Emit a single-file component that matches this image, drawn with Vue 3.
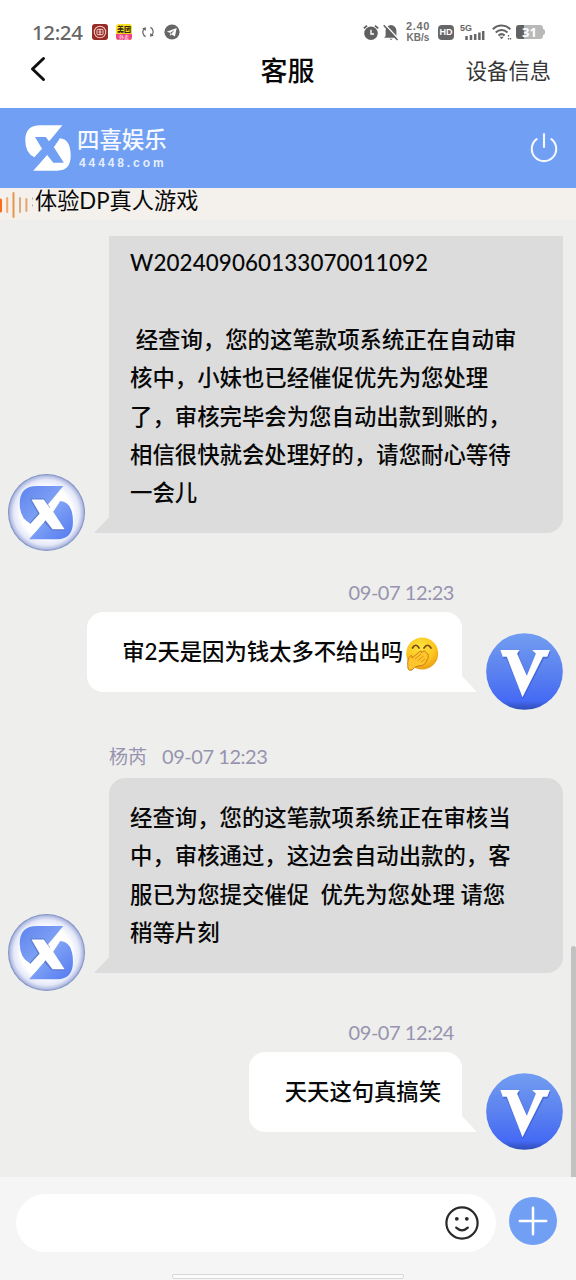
<script setup>
const messages = [
  {
    side: 'left',
    kind: 'first',
    lines: ['W202409060133070011092', '', ' 经查询，您的这笔款项系统正在自动审', '核中，小妹也已经催促优先为您处理', '了，审核完毕会为您自动出款到账的，', '相信很快就会处理好的，请您耐心等待', '一会儿'],
  },
  { side: 'right', time: '09-07 12:23', lines: ['审2天是因为钱太多不给出吗'], emoji: true },
  {
    side: 'left',
    name: '杨芮',
    time: '09-07 12:23',
    lines: ['经查询，您的这笔款项系统正在审核当', '中，审核通过，这边会自动出款的，客', '服已为您提交催促  优先为您处理 请您', '稍等片刻'],
  },
  { side: 'right', time: '09-07 12:24', lines: ['天天这句真搞笑'] },
]
</script>

<template>
  <div class="screen">
    <svg class="defs" width="0" height="0">
      <defs>
        <linearGradient id="blue" x1="0" y1="0" x2="1" y2="1">
          <stop offset="0" stop-color="#5d83ee" /><stop offset=".5" stop-color="#82a5f5" /><stop offset="1" stop-color="#5379f0" />
        </linearGradient>
        <radialGradient id="pearl">
          <stop offset=".65" stop-color="#fff" /><stop offset=".85" stop-color="#e4e8f8" /><stop offset=".95" stop-color="#b3bde2" /><stop offset="1" stop-color="#7286bd" />
        </radialGradient>
        <linearGradient id="disc" x1="0" y1="0" x2="0" y2="1">
          <stop offset="0" stop-color="#729df1" /><stop offset=".5" stop-color="#5b82ef" /><stop offset=".88" stop-color="#456af5" /><stop offset="1" stop-color="#2f4cb4" />
        </linearGradient>
        <radialGradient id="face" cx=".45" cy=".3" r=".75">
          <stop offset="0" stop-color="#ffe43e" /><stop offset=".6" stop-color="#fcc51f" /><stop offset="1" stop-color="#e79712" />
        </radialGradient>
      </defs>
    </svg>

    <header class="top">
      <div class="status">
        <span class="clock">12:24</span>
        <svg class="app-red" width="16" height="16" viewBox="0 0 16 16">
          <rect width="16" height="16" rx="3" fill="#962a25" />
          <circle cx="8" cy="8" r="5.7" fill="none" stroke="#f1c9c4" stroke-width="1.1" />
          <rect x="5" y="5.3" width="6" height="5.4" rx="1" fill="none" stroke="#f4d8d4" />
          <path d="M8 5v6M6.5 8h3" stroke="#f4d8d4" />
        </svg>
        <span class="app-yellow"><b>美团</b><i>外卖</i></span>
        <svg class="sync" width="14" height="14" viewBox="0 0 14 14" fill="none" stroke="#666" stroke-width="1.2">
          <path d="M4.6 11.6A5.1 5.1 0 0 1 3 3.8M9.4 2.4A5.1 5.1 0 0 1 11 10.2" />
          <path d="M1.2 3.2 5 2.2 4.6 6ZM12.8 10.8 9 11.8 9.4 8Z" fill="#666" stroke="none" />
        </svg>
        <svg class="plane" width="16" height="16" viewBox="0 0 16 16">
          <circle cx="8" cy="8" r="7.6" fill="#666" />
          <path d="M2.7 7.8 12.7 4l-1.8 8.4-3-2-1.5 1.4-.4-3z" fill="#fff" />
          <path d="m6 9 4.5-3-3.2 4" fill="#666" />
        </svg>
        <span class="spacer"></span>
        <svg class="alarm" width="16" height="17" viewBox="0 0 16 17" fill="none">
          <circle cx="8" cy="9.2" r="6.8" fill="#606060" />
          <path d="M.8 4.4 4 1.6M15.2 4.4 12 1.6" stroke="#606060" stroke-width="1.8" />
          <path d="M8 5.7V10h3" stroke="#fff" stroke-width="1.4" />
        </svg>
        <svg class="bell" width="16" height="17" viewBox="0 0 16 17">
          <path d="M2.6 12V6.5a5.4 5.4 0 0 1 10.8 0V12l1.5 1.8H1.1zM6.3 14.7h3.4L8 16z" fill="#646464" />
          <path d="m2 .6 14 15" stroke="#fff" stroke-width="1.5" /><path d="m.7 1.2 13.8 14.8" stroke="#606060" stroke-width="1.5" />
        </svg>
        <span class="speed"><span>2.40</span><span>KB/s</span></span>
        <span class="hd">HD</span>
        <svg class="signal" width="25" height="17" viewBox="0 0 25 17">
          <text x="0" y="7" class="five-g">5G</text>
          <path d="M6.5 12v4M11 11v5M15.2 10v6M19.4 8.5V16M23.2 7v9" stroke="#666" stroke-width="2.5" />
        </svg>
        <svg class="wifi" width="20" height="16" viewBox="0 0 20 16" fill="none" stroke="#626262" stroke-width="2">
          <path d="M.8 5.2c5-5 12.5-5 17.5 0M3.7 8.5c3.5-3.3 8.3-3.3 11.8 0M6.5 11.5c2-1.8 4.2-1.8 6.2 0" />
          <path d="m7.4 12.8 2.2 2.5 2.2-2.5z" fill="#626262" stroke="none" />
          <path d="M16.5 11v1.6M16.5 14v1.5M18.5 14v1.5" stroke-width="1.3" />
        </svg>
        <span class="battery"><b>31</b></span>
      </div>
      <nav class="nav">
        <svg width="16" height="26" viewBox="0 0 16 26"><path d="M13.5 2.5 2.5 13l11 10.5" fill="none" stroke="#101010" stroke-width="3" stroke-linecap="round" stroke-linejoin="round" /></svg>
        <h1>客服</h1>
        <span class="device">设备信息</span>
      </nav>
    </header>

    <section class="brand">
      <svg class="mark" width="46" height="46" viewBox="59 77 161 161">
        <path d="M190 78H112Q60 78 60 130Q60 175 92 190L154 122ZM88 237H172Q219 237 219 185Q219 125 180 123L135 183Z" fill="#fff" />
        <path d="M94 119H132L151 145L168 124L181 123L160 155L195 209H158L136 181L104 218L93 190L119 161Z" fill="#709ff3" />
      </svg>
      <div class="brand-text"><strong>四喜娱乐</strong><span>44448.com</span></div>
      <svg class="power" width="30" height="32" viewBox="0 0 30 32" fill="none" stroke="#f4f8ff" stroke-width="2.1" stroke-linecap="round">
        <path d="M15 2v13M7.6 7.2a12.2 12.2 0 1 0 14.8 0" />
      </svg>
    </section>

    <section class="notice">
      <svg width="34" height="28" viewBox="0 0 34 28" fill="none" stroke-linecap="round" stroke-width="2">
        <path d="M.5 9v11" stroke="#ff6a18" stroke-width="3" />
        <path d="M7.2 7v14" stroke="#f5a66a" /><path d="M13.5 2v24" stroke="#e5954e" />
        <path d="M20 7v14" stroke="#d9ac82" /><path d="M26.4 8v12" stroke="#e3a66c" />
        <path d="M32.5 7v1M32.5 14v1" stroke="#aaa" stroke-width="1" />
      </svg>
      <span>体验DP真人游戏</span>
    </section>

    <main class="chat">
      <article v-for="(m, i) in messages" :key="i" class="message" :class="[m.side, m.kind]">
        <div v-if="m.time" class="meta"><span v-if="m.name" class="name">{{ m.name }}</span><time>{{ m.time }}</time></div>
        <div class="row">
          <svg v-if="m.side === 'left'" class="avatar" viewBox="25 42 230 230">
            <circle cx="140" cy="157" r="115" fill="url(#pearl)" />
            <path d="M190 78H112Q60 78 60 130Q60 175 92 190L154 122ZM88 237H172Q219 237 219 185Q219 125 180 123L135 183Z" fill="url(#blue)" />
            <path d="M90 115H133L151 141L148 148L98 121L121 161L94 192L89 188L114 160ZM157 211H197L190 204H160L138 180L132 187L136 190Z" fill="#4d6bbd" opacity=".6" />
            <path d="M95 118H132L151 145L168 124L181 123L160 155L194 207H158L136 179L104 218L93 190L120 161Z" fill="#fff" />
          </svg>
          <div class="bubble">
            <svg class="tail" width="16" height="18" viewBox="0 0 16 18"><path d="M0 18 16 1V18Z" /></svg>
            <p v-for="(line, n) in m.lines" :key="n" :class="{ code: i === 0 && n === 0 }">{{ line }}<svg v-if="m.emoji" class="emoji" width="34" height="34" viewBox="0 0 34 34">
              <circle cx="17.2" cy="16.5" r="16" fill="url(#face)" />
              <path d="M7.5 11q3.3-5.5 6.6 0M19 11q3.5-5.5 7 0" fill="none" stroke="#71471b" stroke-width="1.7" stroke-linecap="round" />
              <path d="M2.8 28.5Q2 22 5.8 18.5Q7 18 7.2 21L14.5 14.5Q17 13.2 16.5 15.5Q20 12.5 21 15.5Q25.5 18 21.5 24Q20 29 13 29Q9 30 7 33Q2.5 34.5 2.8 28.5Z" fill="#ffc52d" stroke="#cb7913" stroke-width="1" />
              <path d="m10 22 6-5M13 23.5l5.5-4.5M16 25l4-3" stroke="#dd9018" fill="none" />
            </svg></p>
          </div>
          <svg v-if="m.side === 'right'" class="avatar" viewBox="318 191 230 230">
            <circle cx="433" cy="306" r="114.5" fill="url(#disc)" />
            <path d="M365 246H420L415 257L441 319L469 257L460 246H511L503 267H491L429 388L379 267H370Z" fill="#3558cd" opacity=".6" />
            <path d="M361 242H418L411 253L440 319L467 253L456 242H509L501 262H488L427 383L380 262H368Z" fill="#fff" />
          </svg>
        </div>
      </article>
      <span class="scrollbar"></span>
    </main>

    <footer class="composer">
      <div class="input">
        <svg width="36" height="36" viewBox="0 0 36 36" fill="none" stroke="#292929" stroke-width="2.2" stroke-linecap="round">
          <circle cx="18" cy="18" r="15.6" /><path d="M12.2 22.6q5.8 5.4 11.6 0" />
          <circle cx="12.8" cy="13.8" r="1.9" fill="#292929" stroke="none" /><circle cx="22.8" cy="13.8" r="1.9" fill="#292929" stroke="none" />
        </svg>
      </div>
      <button class="add" aria-label="+"><svg width="30" height="30" viewBox="0 0 30 30"><path d="M15 1.8v26.4M1.8 15h26.4" stroke="#fff" stroke-width="2.5" stroke-linecap="round" /></svg></button>
      <span class="home"></span>
    </footer>
  </div>
</template>

<style>
body { margin: 0; overflow: hidden; }
</style>

<style scoped>
* { box-sizing: border-box; }
.screen { width: 576px; height: 1280px; display: flex; flex-direction: column; overflow: hidden; background: #eeeeec; color: #080808; font-family: Lato, "Noto Sans CJK SC", sans-serif; }
.defs { position: absolute; }
svg { flex: none; display: block; }
.top { height: 108px; flex: none; background: #fff; }
.status { height: 45px; padding: 19px 32px 0; display: flex; align-items: center; color: #666; }
.clock { width: 60px; font: 500 20.5px/24px "Noto Sans", sans-serif; letter-spacing: -.4px; white-space: nowrap; }
.app-yellow { width: 16px; height: 16px; margin: 0 9px 0 8px; border-radius: 3px; overflow: hidden; background: #fbdf24; display: flex; flex-direction: column; align-items: center; }
.app-yellow b { font: 900 7px/10px "Noto Sans CJK SC", sans-serif; color: #32290b; }
.app-yellow i { width: 100%; background: #ef4583; color: #fff; text-align: center; font: 5px/6px "Noto Sans CJK SC", sans-serif; }
.plane { margin-left: 9px; }
.spacer { flex: 1; }
.bell { margin-left: 4px; }
.speed { width: 26px; margin-left: 6px; font: 700 10px/11px "Liberation Sans", sans-serif; display: flex; flex-direction: column; align-items: center; color: #707070; }
.speed span { display: block; height: 11px; }
.speed span:first-child { font-size: 11px; letter-spacing: .7px; }
.hd { width: 16px; height: 15px; margin-left: 7px; border-radius: 4px; background: #666; color: #fff; text-align: center; font: 700 9px/15px "Liberation Sans", sans-serif; }
.signal { margin-left: 6px; overflow: visible; }
.five-g { font: 700 9px "Liberation Sans", sans-serif; fill: #666; }
.wifi { margin-left: 7px; }
.battery { position: relative; width: 27px; height: 14px; margin: 0 1px 0 4px; border-radius: 3px; background: linear-gradient(90deg, #626262 31%, #b9b9b9 31%); text-align: center; }
.battery::after { content: ""; position: absolute; right: -2px; top: 4px; width: 2px; height: 6px; border-radius: 0 2px 2px 0; background: #b9b9b9; }
.battery b { display: block; color: #fff; font: 700 13px/14px "Noto Sans", sans-serif; }
.nav { height: 48px; padding: 0 25px 0 30px; display: grid; grid-template-columns: 1fr auto 1fr; align-items: center; }
h1 { margin: 3px 0 0 -6px; font-size: 27px; font-weight: 500; line-height: 40px; }
.device { justify-self: end; margin-top: 3px; font-size: 21.3px; line-height: 30px; color: #363636; }
.brand { height: 80px; flex: none; background: #709ff3; display: flex; align-items: center; padding: 0 17px 0 25px; }
.brand-text { flex: 1; margin-left: 6px; display: flex; flex-direction: column; color: #f6f9ff; }
.brand-text strong { font-size: 22.4px; font-weight: 500; line-height: 28px; }
.brand-text span { margin: 1px 0 0 2px; font: 700 12px/16px "Liberation Sans", sans-serif; letter-spacing: 2.9px; opacity: .88; }
.notice { height: 32px; flex: none; display: flex; background: #f4f0ec; }
.notice svg { margin-top: 3px; }
.notice span { font-size: 22.2px; line-height: 26px; margin-left: 1px; white-space: nowrap; }
.chat { position: relative; height: 957px; flex: none; padding-top: 16px; }
.message { margin-bottom: 47px; }
.message:nth-child(2) { margin-bottom: 52px; }
.meta { height: 24px; margin-bottom: 8px; font-size: 20px; line-height: 25px; letter-spacing: -.45px; color: #9794b0; }
.left .meta { padding-left: 109px; margin-bottom: 10px; }
.right .meta { padding-right: 122px; text-align: right; }
.name { margin-right: 15px; font-size: 19px; letter-spacing: 0; }
.row { display: flex; align-items: flex-end; }
.left .row { padding: 0 13px 0 8px; gap: 24px; }
.right .row { padding-right: 13px; gap: 24px; justify-content: flex-end; }
.avatar { width: 77px; height: 77px; margin-bottom: -18px; }
.bubble { position: relative; padding: 21px 21px 20px; border-radius: 16px; }
.left .bubble { width: 454px; background: #dcdcdc; border-bottom-left-radius: 0; }
.first .bubble { height: 297px; padding-top: 8px; padding-bottom: 20px; border-top-left-radius: 0; border-top-right-radius: 0; }
.right .bubble { height: 80px; padding: 21px 21px 20px 35.5px; background: #fff; border-bottom-right-radius: 0; }
.tail { position: absolute; bottom: 0; left: -15px; fill: #dcdcdc; }
.right .tail { left: auto; right: -15px; transform: scaleX(-1); fill: #fff; }
p { margin: 0; height: 38.4px; display: flex; align-items: center; font-size: 22.4px; font-weight: 500; line-height: 38.4px; white-space: pre; }
.right p { letter-spacing: -.07px; }
.code { letter-spacing: .1px; }
.emoji { margin: 3px 2px 0 2px; }
.scrollbar { position: absolute; right: 0; top: 726px; width: 5px; height: 231px; border-radius: 3px 3px 0 0; background: #c2c2c2; }
.composer { position: relative; flex: 1; padding: 17px 19px 0 16px; background: #f5f5f5; display: flex; align-items: flex-start; gap: 13px; }
.input { width: 480px; height: 58px; border-radius: 29px; background: #fff; display: flex; align-items: center; justify-content: flex-end; padding-right: 16px; }
.add { width: 48px; height: 48px; margin-top: 3px; padding: 0; border: 0; border-radius: 50%; background: #709ff3; display: flex; align-items: center; justify-content: center; }
.home { position: absolute; bottom: 1px; left: 172px; width: 232px; height: 5px; border: 1px solid #d8d8d8; border-radius: 2px; background: #fafafa; }
</style>
